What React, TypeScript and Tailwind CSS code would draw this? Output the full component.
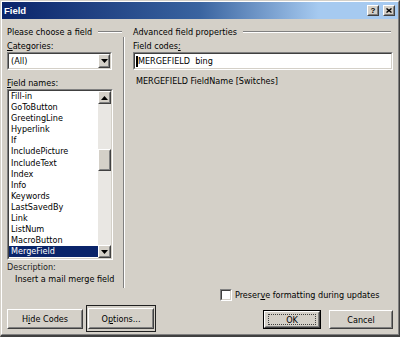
import React from 'react';

function Sunken({ className, inner, children }: { className: string; inner?: string; children?: React.ReactNode }) {
  return (
    <div className={'border border-t-[#808080] border-l-[#808080] border-b-white border-r-white ' + className}>
      <div className={'h-full border border-t-[#404040] border-l-[#404040] border-b-[#d4d0c8] border-r-[#d4d0c8] ' + (inner ?? 'bg-white')}>
        {children}
      </div>
    </div>
  );
}

function Raised({ className, children }: { className: string; children?: React.ReactNode }) {
  return (
    <div className={'border border-t-white border-l-white border-b-[#404040] border-r-[#404040] bg-[#d4d0c8] ' + className}>
      <div className="h-full w-full border border-t-[#d4d0c8] border-l-[#d4d0c8] border-b-[#808080] border-r-[#808080] flex items-center justify-center">
        {children}
      </div>
    </div>
  );
}

function Down() {
  return (
    <svg width="7" height="4" viewBox="0 0 7 4">
      <polygon points="0,0 7,0 3.5,4" fill="#000" />
    </svg>
  );
}

function Up() {
  return (
    <svg width="7" height="4" viewBox="0 0 7 4">
      <polygon points="0,4 7,4 3.5,0" fill="#000" />
    </svg>
  );
}

function GroupLine({ className }: { className: string }) {
  return <div className={'h-[2px] border-t border-t-[#808080] border-b border-b-white ' + className} />;
}

const items = [
  'Fill-in',
  'GoToButton',
  'GreetingLine',
  'Hyperlink',
  'If',
  'IncludePicture',
  'IncludeText',
  'Index',
  'Info',
  'Keywords',
  'LastSavedBy',
  'Link',
  'ListNum',
  'MacroButton',
  'MergeField',
];

export default function App() {
  return (
    <div className="w-[400px] h-[337px] bg-[#d4d0c8] border-t border-l border-t-[#d4d0c8] border-l-[#d4d0c8] border-r border-r-[#404040] border-b-2 border-b-[#404040] font-['DejaVu_Sans_Condensed','Liberation_Sans',sans-serif] text-[9px] leading-[12px] text-black overflow-hidden">
      <div className="h-full flex flex-col border-t border-l border-t-white border-l-white border-r border-b border-r-[#808080] border-b-[#808080]">
        {/* title bar */}
        <div className="h-[17px] flex items-center bg-[linear-gradient(to_right,#0a246a_0%,#3a64a0_50%,#a6caf0_80%,#a6caf0_100%)] pl-[2px] pr-[3px]">
          <span className="font-bold text-white text-[9.5px] font-['Liberation_Sans',sans-serif]">Field</span>
          <div className="flex-1" />
          <div className="flex gap-[4px]">
            <Raised className="w-[12px] h-[11px]">
              <span className="font-bold text-[8px] leading-[8px] font-['Liberation_Sans',sans-serif]">?</span>
            </Raised>
            <Raised className="w-[12px] h-[11px]">
              <svg width="6" height="5" viewBox="0 0 6 5">
                <path d="M0.5 0.5 L5.5 4.5 M5.5 0.5 L0.5 4.5" stroke="#000" strokeWidth="1.4" />
              </svg>
            </Raised>
          </div>
        </div>

        {/* content */}
        <div className="flex-1 flex flex-col pl-[5px] pr-[5px] pt-[7px]">
          <div className="h-[262px] flex">
            {/* left column */}
            <div className="w-[117px] flex flex-col">
              <div className="h-[12px] flex items-center">
                <span>Please choose a field</span>
                <GroupLine className="flex-1 ml-[6px] mr-[1px]" />
              </div>
              <div className="h-[12px] mt-[2px]">
                <u>C</u>ategories:
              </div>
              <Sunken className="w-[105px] h-[18px]">
                <div className="h-full flex items-center">
                  <span className="flex-1 pl-[2px]">(All)</span>
                  <Raised className="w-[12px] h-[14px]">
                    <Down />
                  </Raised>
                </div>
              </Sunken>
              <div className="h-[12px] mt-[7px]">
                <u>F</u>ield names:
              </div>
              <Sunken className="w-[106px] h-[171px]">
                <div className="h-full flex">
                  <div className="flex-1 flex flex-col">
                    {items.map((it) => (
                      <div
                        key={it}
                        className={
                          it === 'MergeField'
                            ? 'h-[11.1px] leading-[11px] pl-[2px] bg-[#0a246a] text-white'
                            : 'h-[11.1px] leading-[11px] pl-[2px]'
                        }
                      >
                        {it}
                      </div>
                    ))}
                  </div>
                  <div className="w-[13px] flex flex-col bg-[#e9e7e3]">
                    <Raised className="w-[13px] h-[13px]">
                      <Up />
                    </Raised>
                    <div className="h-[45px]" />
                    <Raised className="w-[13px] h-[22px]" />
                    <div className="flex-1" />
                    <Raised className="w-[13px] h-[13px]">
                      <Down />
                    </Raised>
                  </div>
                </div>
              </Sunken>
              <div className="h-[12px] mt-[1px] text-[#222]">Description:</div>
              <div className="h-[12px] pl-[8px]">Insert a mail merge field</div>
            </div>

            {/* divider */}
            <div className="w-[2px] h-[251px] mt-[11px] border-l border-l-[#808080] border-r border-r-white" />

            {/* right column */}
            <div className="ml-[8px] w-[260px] flex flex-col">
              <div className="h-[12px] flex items-center">
                <span>Advanced field properties</span>
                <GroupLine className="flex-1 ml-[6px] mr-[2px]" />
              </div>
              <div className="h-[12px] mt-[2px]">
                Field codes<u>:</u>
              </div>
              <Sunken className="w-[260px] h-[18px]">
                <div className="h-full flex items-center pl-[1px]">
                  <div className="w-[2px] h-[11px] bg-black" />
                  <span className="whitespace-pre">MERGEFIELD  bing</span>
                </div>
              </Sunken>
              <div className="h-[12px] mt-[5px] pl-[3px]">MERGEFIELD FieldName [Switches]</div>
            </div>
          </div>

          {/* checkbox row */}
          <div className="h-[13px] flex items-center ml-[213px]">
            <Sunken className="w-[12px] h-[12px]" />
            <span className="ml-[3px]">
              Preser<u>v</u>e formatting during updates
            </span>
          </div>

          {/* buttons */}
          <div className="h-[28px] mt-[4px] flex items-start">
            <Raised className="w-[76px] h-[20px] mt-[4px]">
              <span>
                H<u>i</u>de Codes
              </span>
            </Raised>
            <div className="ml-[3px] w-[70px] h-[27px] border border-[#202020] p-[1px] flex items-center justify-center">
              <Raised className="w-[66px] h-[21px]">
                <span>
                  O<u>p</u>tions...
                </span>
              </Raised>
            </div>
            <div className="flex-1" />
            <div className="mt-[5px] w-[58px] h-[19px] border border-black">
              <Raised className="w-full h-full">
                <span className="border border-dotted border-[#404040] w-[48px] h-[11px] flex items-center justify-center leading-[10px]">
                  OK
                </span>
              </Raised>
            </div>
            <Raised className="ml-[8px] mt-[5px] w-[64px] h-[19px]">
              <span>Cancel</span>
            </Raised>
          </div>
        </div>
      </div>
    </div>
  );
}
